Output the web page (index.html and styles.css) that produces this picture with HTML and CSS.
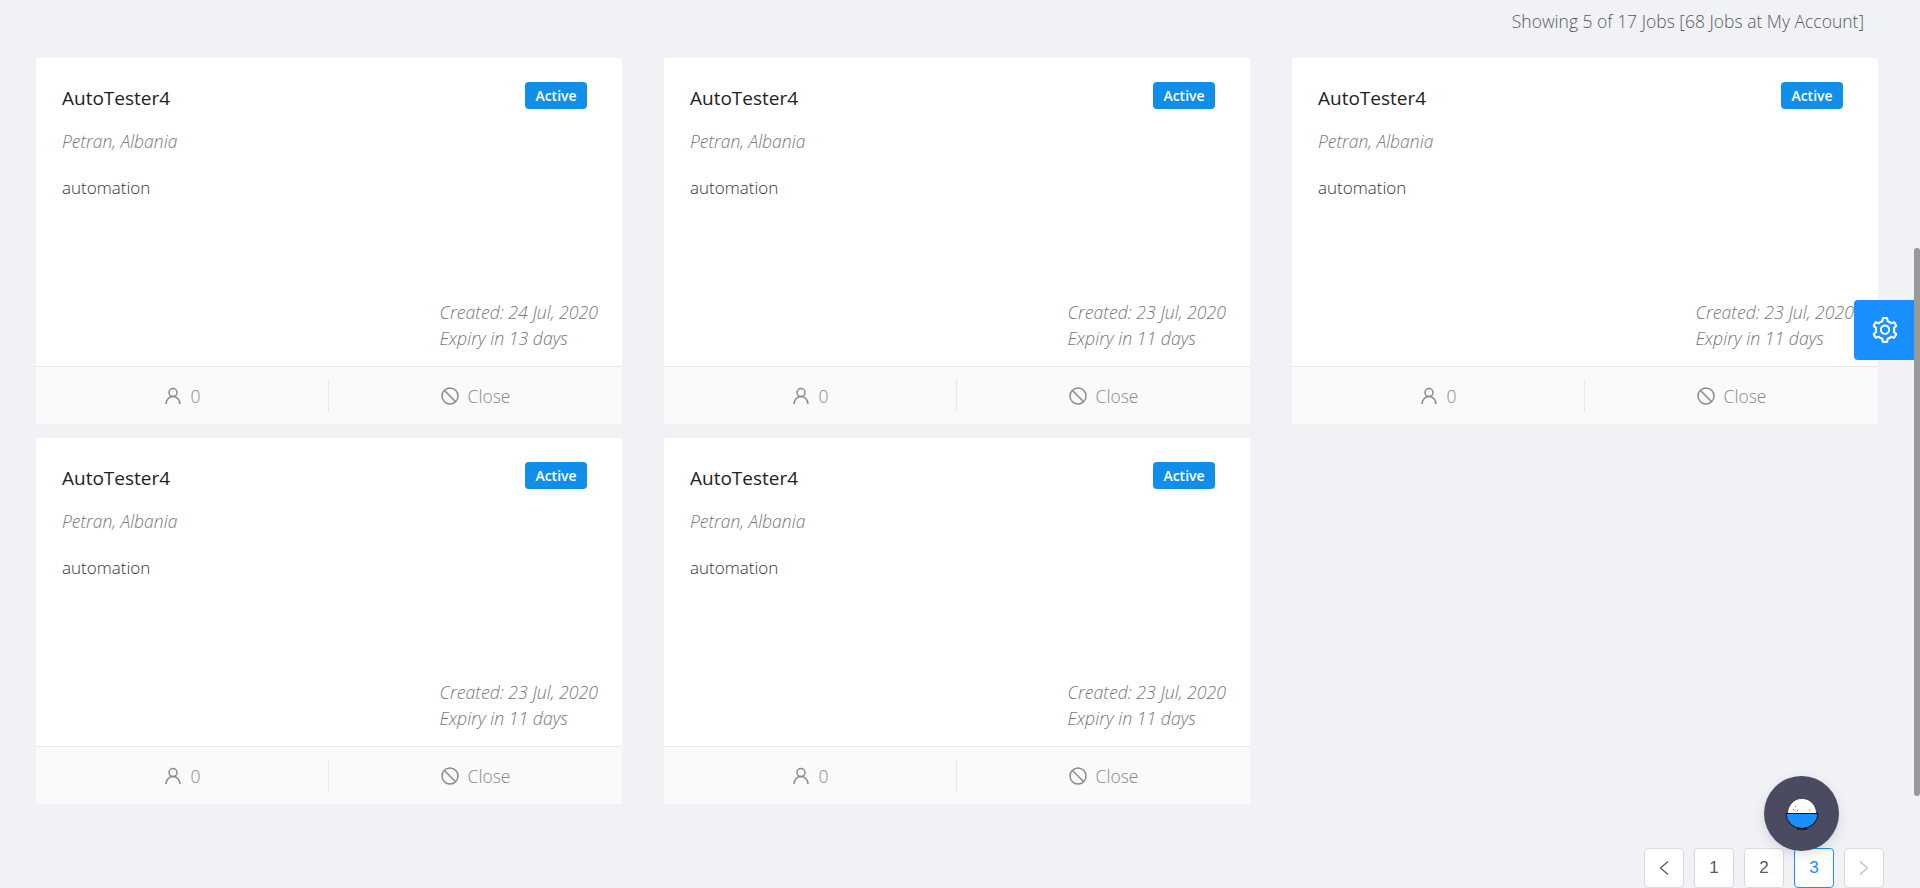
FILE: index.html
```html
<!DOCTYPE html>
<html>

	<head>
		<meta charset="UTF-8">
		<title>Jobs</title>
		<link rel="stylesheet" href="styles.css">
	</head>

	<body>
		<svg class="defs" width="0" height="0">
			<symbol id="i-user" viewBox="0 0 18 18">
				<circle cx="9" cy="5.6" r="4" fill="none" stroke="currentColor" stroke-width="1.5" />
				<path d="M2 17c0-4 3-7.4 7-7.4s7 3.4 7 7.4" fill="none" stroke="currentColor" stroke-width="1.5" />
			</symbol>
			<symbol id="i-stop" viewBox="0 0 18 18">
				<circle cx="9" cy="9" r="8" fill="none" stroke="currentColor" stroke-width="1.5" />
				<path d="M3.5 3.5l11 11" fill="none" stroke="currentColor" stroke-width="1.5" />
			</symbol>
		</svg>

		<div id="page">
			<p class="summary">Showing 5 of 17 Jobs [68 Jobs at My Account]</p>

			<div class="job-grid">
				<div class="job-card">
					<div class="job-body">
						<div class="job-head">
							<h3 class="job-title">AutoTester4</h3>
							<span class="badge">Active</span>
						</div>
						<p class="job-location">Petran, Albania</p>
						<p class="job-tag">automation</p>
						<div class="job-dates">
							<div>Created: 24 Jul, 2020</div>
							<div>Expiry in 13 days</div>
						</div>
					</div>
					<ul class="job-actions">
						<li><svg class="icon"><use href="#i-user" /></svg>0</li>
						<li><svg class="icon"><use href="#i-stop" /></svg>Close</li>
					</ul>
				</div>

				<div class="job-card">
					<div class="job-body">
						<div class="job-head">
							<h3 class="job-title">AutoTester4</h3>
							<span class="badge">Active</span>
						</div>
						<p class="job-location">Petran, Albania</p>
						<p class="job-tag">automation</p>
						<div class="job-dates">
							<div>Created: 23 Jul, 2020</div>
							<div>Expiry in 11 days</div>
						</div>
					</div>
					<ul class="job-actions">
						<li><svg class="icon"><use href="#i-user" /></svg>0</li>
						<li><svg class="icon"><use href="#i-stop" /></svg>Close</li>
					</ul>
				</div>

				<div class="job-card">
					<div class="job-body">
						<div class="job-head">
							<h3 class="job-title">AutoTester4</h3>
							<span class="badge">Active</span>
						</div>
						<p class="job-location">Petran, Albania</p>
						<p class="job-tag">automation</p>
						<div class="job-dates">
							<div>Created: 23 Jul, 2020</div>
							<div>Expiry in 11 days</div>
						</div>
					</div>
					<ul class="job-actions">
						<li><svg class="icon"><use href="#i-user" /></svg>0</li>
						<li><svg class="icon"><use href="#i-stop" /></svg>Close</li>
					</ul>
				</div>

				<div class="job-card">
					<div class="job-body">
						<div class="job-head">
							<h3 class="job-title">AutoTester4</h3>
							<span class="badge">Active</span>
						</div>
						<p class="job-location">Petran, Albania</p>
						<p class="job-tag">automation</p>
						<div class="job-dates">
							<div>Created: 23 Jul, 2020</div>
							<div>Expiry in 11 days</div>
						</div>
					</div>
					<ul class="job-actions">
						<li><svg class="icon"><use href="#i-user" /></svg>0</li>
						<li><svg class="icon"><use href="#i-stop" /></svg>Close</li>
					</ul>
				</div>

				<div class="job-card">
					<div class="job-body">
						<div class="job-head">
							<h3 class="job-title">AutoTester4</h3>
							<span class="badge">Active</span>
						</div>
						<p class="job-location">Petran, Albania</p>
						<p class="job-tag">automation</p>
						<div class="job-dates">
							<div>Created: 23 Jul, 2020</div>
							<div>Expiry in 11 days</div>
						</div>
					</div>
					<ul class="job-actions">
						<li><svg class="icon"><use href="#i-user" /></svg>0</li>
						<li><svg class="icon"><use href="#i-stop" /></svg>Close</li>
					</ul>
				</div>
			</div>

			<ul class="pager">
				<li class="arrow"><svg viewBox="0 0 12 16" width="12" height="16"><path d="M10 1.5L2.5 8l7.5 6.5" fill="none" stroke="currentColor" stroke-width="1.3" /></svg></li>
				<li>1</li>
				<li>2</li>
				<li class="current">3</li>
				<li class="arrow off"><svg viewBox="0 0 12 16" width="12" height="16"><path d="M2 1.5L9.5 8 2 14.5" fill="none" stroke="currentColor" stroke-width="1.3" /></svg></li>
			</ul>
		</div>

		<!-- settings drawer tab -->
		<div class="settings-tab">
			<svg viewBox="64 64 896 896" width="26" height="26" fill="currentColor"><path d="M924.8 625.7l-65.5-56c3.1-19 4.7-38.4 4.7-57.8s-1.6-38.8-4.7-57.8l65.5-56a32.03 32.03 0 0 0 9.3-35.2l-.9-2.6a443.74 443.74 0 0 0-79.7-137.9l-1.8-2.1a32.12 32.12 0 0 0-35.1-9.5l-81.3 28.9c-30-24.6-63.5-44-99.7-57.6l-15.7-85a32.05 32.05 0 0 0-25.8-25.7l-2.7-.5c-52.1-9.4-106.9-9.4-159 0l-2.7.5a32.05 32.05 0 0 0-25.8 25.7l-15.8 85.4a351.86 351.86 0 0 0-99 57.4l-81.9-29.1a32 32 0 0 0-35.1 9.5l-1.8 2.1a446.02 446.02 0 0 0-79.7 137.9l-.9 2.6c-4.5 12.5-.8 26.5 9.3 35.2l66.3 56.6c-3.1 18.8-4.6 38-4.6 57.1 0 19.2 1.5 38.4 4.6 57.1L99 625.5a32.03 32.03 0 0 0-9.3 35.2l.9 2.6c18.1 50.4 44.9 96.9 79.7 137.9l1.8 2.1a32.12 32.12 0 0 0 35.1 9.5l81.9-29.1c29.8 24.5 63.1 43.9 99 57.4l15.8 85.4a32.05 32.05 0 0 0 25.8 25.7l2.7.5a449.4 449.4 0 0 0 159 0l2.7-.5a32.05 32.05 0 0 0 25.8-25.7l15.7-85a350 350 0 0 0 99.7-57.6l81.3 28.9a32 32 0 0 0 35.1-9.5l1.8-2.1c34.8-41.1 61.6-87.5 79.7-137.9l.9-2.6c4.5-12.3.8-26.3-9.3-35zM788.3 465.9c2.5 15.1 3.8 30.6 3.8 46.1s-1.3 31-3.8 46.1l-6.6 40.1 74.7 63.9a370.03 370.03 0 0 1-42.6 73.6L721 702.8l-31.4 25.8c-23.9 19.6-50.5 35-79.3 45.8l-38.1 14.3-17.9 97a377.5 377.5 0 0 1-85 0l-17.9-97.2-37.8-14.5c-28.5-10.8-55-26.2-78.7-45.7l-31.4-25.9-93.4 33.2c-17-22.9-31.2-47.6-42.6-73.6l75.5-64.5-6.5-40c-2.4-14.9-3.7-30.3-3.7-45.5 0-15.3 1.2-30.6 3.7-45.5l6.5-40-75.5-64.5c11.3-26.1 25.6-50.7 42.6-73.6l93.4 33.2 31.4-25.9c23.7-19.5 50.2-34.9 78.7-45.7l37.9-14.3 17.9-97.2c28.1-3.2 56.8-3.2 85 0l17.9 97 38.1 14.3c28.7 10.8 55.4 26.2 79.3 45.8l31.4 25.8 92.8-32.9c17 22.9 31.2 47.6 42.6 73.6L781.8 426l6.5 39.9zM512 326c-97.2 0-176 78.8-176 176s78.8 176 176 176 176-78.8 176-176-78.8-176-176-176zm79.2 255.2A111.6 111.6 0 0 1 512 614c-29.9 0-58-11.7-79.2-32.8A111.6 111.6 0 0 1 400 502c0-29.9 11.7-58 32.8-79.2C454 401.6 482.1 390 512 390c29.9 0 58 11.6 79.2 32.8A111.6 111.6 0 0 1 624 502c0 29.9-11.7 58-32.8 79.2z" /></svg>
		</div>

		<!-- chat bubble -->
		<div class="chat-bubble">
			<svg viewBox="0 0 34 34" width="34" height="34">
				<path d="M2.5 16.5a14.5 15 0 0 1 29 0z" fill="#fff" stroke="#222" stroke-width="1" stroke-dasharray="1.5 .6" />
				<path d="M1 16.5h32a16 15 0 0 1-32 0z" fill="#1890ff" stroke="#111" stroke-width="1" />
				<path d="M12 32h10" stroke="#111" stroke-width="1.5" />
				<path d="M8 12.5h1M10 9.5h1M9.5 14h1M12 13.5h1M24 13h1" stroke="#666" stroke-width="1" />
			</svg>
		</div>

		<div class="scroll-thumb"></div>
	</body>

</html>
```

FILE: styles.css
```css
* {
	box-sizing: border-box;
}

html,
body {
	margin: 0;
	height: 100%;
	overflow: hidden;
}

body {
	background: #f0f2f5;
	font-family: "Open Sans", "Liberation Sans", sans-serif;
	font-size: 17.5px;
	color: #595959;
}

ul {
	list-style: none;
	margin: 0;
	padding: 0;
}

.defs {
	position: absolute;
}

#page {
	padding: 0 42px 0 36px;
}

.summary {
	margin: 0;
	height: 58px;
	padding: 10px 14px 0 0;
	line-height: 22px;
	text-align: right;
	font-weight: 300;
}

.job-grid {
	display: grid;
	grid-template-columns: repeat(3, 586px);
	grid-auto-rows: 366px;
	column-gap: 42px;
	row-gap: 14px;
}

.job-card {
	display: flex;
	flex-direction: column;
	background: #fff;
	border-radius: 2px;
}

.job-body {
	flex: 1;
	display: flex;
	flex-direction: column;
	padding: 25px 24px 15px 26px;
}

.job-head {
	display: flex;
	justify-content: space-between;
	align-items: flex-start;
	padding-right: 11px;
}

.job-title {
	margin: 0;
	padding-top: 2px;
	font-size: 19px;
	line-height: 26px;
	font-weight: 500;
	color: #222;
}

.badge {
	width: 62px;
	height: 27px;
	margin-top: -1px;
	background: #108ee9;
	border-radius: 4px;
	color: #fff;
	font-size: 14px;
	font-weight: 600;
	line-height: 27px;
	text-align: center;
}

.job-location {
	margin: 19px 0 0;
	line-height: 22px;
	font-style: italic;
	font-weight: 300;
	color: #777;
}

.job-tag {
	margin: 25px 0 0;
	line-height: 22px;
	font-size: 17px;
	font-weight: 300;
	color: #333;
}

.job-dates {
	margin-top: auto;
	align-self: flex-end;
	line-height: 26px;
	font-size: 17.7px;
	font-style: italic;
	font-weight: 300;
	color: #777;
}

.job-actions {
	display: flex;
	height: 58px;
	padding: 12px 0;
	background: #fafafa;
	border-top: 1px solid #e8e8e8;
	color: #888;
	font-weight: 300;
}

.job-actions li {
	width: 50%;
	display: flex;
	align-items: center;
	justify-content: center;
}

.job-actions li:first-child {
	border-right: 1px solid #e8e8e8;
}

.icon {
	width: 18px;
	height: 18px;
	margin-right: 9px;
	color: #8a8a8a;
}

.pager {
	display: flex;
	justify-content: flex-end;
	gap: 10px;
	margin-top: 44px;
	margin-right: -6px;
}

.pager li {
	width: 40px;
	height: 40px;
	display: flex;
	align-items: center;
	justify-content: center;
	background: #fff;
	border: 1px solid #d9d9d9;
	border-radius: 4px;
	font-family: "Liberation Sans", sans-serif;
	font-size: 17px;
	color: #595959;
}

.pager .current {
	border-color: #1890ff;
	color: #1890ff;
}

.pager .off {
	color: #bfbfbf;
}

.settings-tab {
	position: absolute;
	top: 300px;
	right: 6px;
	width: 60px;
	height: 60px;
	padding-left: 1px;
	display: flex;
	align-items: center;
	justify-content: center;
	background: #1890ff;
	border-radius: 4px 0 0 4px;
	color: #fff;
}

.chat-bubble {
	position: absolute;
	left: 1764px;
	top: 776px;
	width: 75px;
	height: 75px;
	display: flex;
	align-items: center;
	justify-content: center;
	background: #4a4a60;
	border-radius: 50%;
	box-shadow: 0 4px 12px rgba(0, 0, 0, 0.12);
}

.scroll-thumb {
	position: absolute;
	top: 248px;
	right: 0;
	width: 6px;
	height: 548px;
	background: #999;
	border-radius: 3px;
}
```
